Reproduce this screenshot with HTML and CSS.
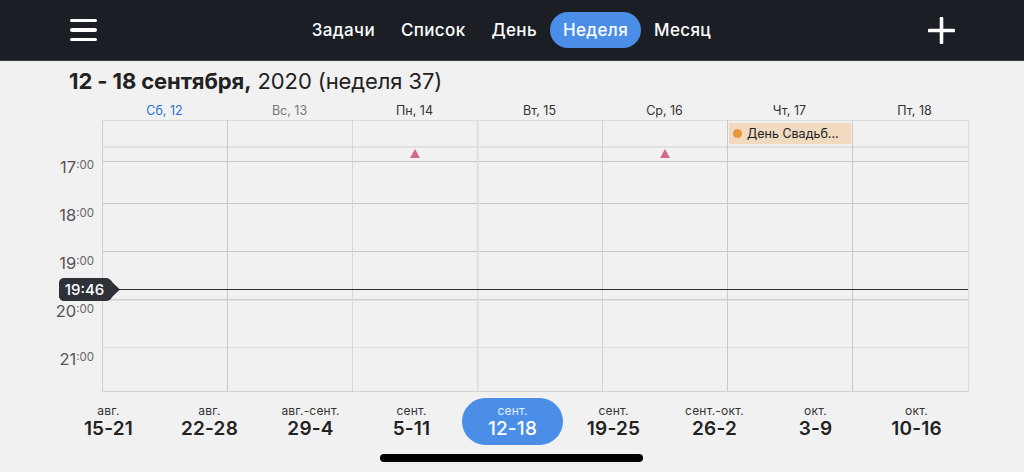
FILE: index.html
```html
<!DOCTYPE html>
<html lang="ru">
<head>
<meta charset="utf-8">
<link rel="stylesheet" href="styles.css">
</head>
<body>
<div class="app">
  <header class="topbar">
    <div class="burger"><span></span><span></span><span></span></div>
    <nav class="tabs">
      <span class="tab">Задачи</span>
      <span class="tab">Список</span>
      <span class="tab">День</span>
      <span class="tab active">Неделя</span>
      <span class="tab">Месяц</span>
    </nav>
    <div class="plus">
      <svg width="27" height="27" viewBox="0 0 27 27"><path d="M13.5 1.5V25.5M1.5 13.5H25.5" stroke="#fff" stroke-width="3.6" stroke-linecap="round"/></svg>
    </div>
  </header>

  <div class="title"><b>12 - 18 сентября,</b> 2020 (неделя 37)</div>

  <div class="dayhead">
    <span class="today">Сб, 12</span>
    <span class="muted">Вс, 13</span>
    <span>Пн, 14</span>
    <span>Вт, 15</span>
    <span>Ср, 16</span>
    <span>Чт, 17</span>
    <span>Пт, 18</span>
  </div>

  <div class="cal">
    <div class="hours">
      <div class="hr"><span class="h">17</span><span class="m">:00</span></div>
      <div class="hr"><span class="h">18</span><span class="m">:00</span></div>
      <div class="hr"><span class="h">19</span><span class="m">:00</span></div>
      <div class="hr"><span class="h">20</span><span class="m">:00</span></div>
      <div class="hr"><span class="h">21</span><span class="m">:00</span></div>
    </div>
    <div class="board">
      <div class="row allday">
        <div></div><div></div><div></div><div></div><div></div>
        <div class="event"><i class="dot"></i>День Свадьб...</div>
        <div></div>
      </div>
      <div class="row marks">
        <div></div><div></div>
        <div class="mark"><i class="tri"></i></div>
        <div></div>
        <div class="mark"><i class="tri"></i></div>
        <div></div><div></div>
      </div>
      <div class="row r42 dark"></div>
      <div class="row r48 dark"></div>
      <div class="row r48 dark"></div>
      <div class="row r48 mid"></div>
      <div class="row r45 light"></div>
      <div class="cols">
        <div></div><div class="c2"></div><div class="c3"></div><div class="c4"></div><div class="c5"></div><div class="c6"></div><div class="c7"></div>
      </div>
      <div class="now"></div>
    </div>
    <div class="badge">
      <svg class="badge-bg" width="62" height="23" viewBox="0 0 62 23"><path d="M5 0H47C50 0 52 2 54 5L61 11.5L54 18C52 21 50 23 47 23H5C2.2 23 0 20.8 0 18V5C0 2.2 2.2 0 5 0Z" fill="#2f3139"/></svg>
      <span class="badge-text">19:46</span>
    </div>
  </div>

  <div class="weeks">
    <div class="wk"><span class="mo">авг.</span><span class="rg">15-21</span></div>
    <div class="wk"><span class="mo">авг.</span><span class="rg">22-28</span></div>
    <div class="wk"><span class="mo">авг.-сент.</span><span class="rg">29-4</span></div>
    <div class="wk"><span class="mo">сент.</span><span class="rg">5-11</span></div>
    <div class="wk sel"><span class="mo">сент.</span><span class="rg">12-18</span></div>
    <div class="wk"><span class="mo">сент.</span><span class="rg">19-25</span></div>
    <div class="wk"><span class="mo">сент.-окт.</span><span class="rg">26-2</span></div>
    <div class="wk"><span class="mo">окт.</span><span class="rg">3-9</span></div>
    <div class="wk"><span class="mo">окт.</span><span class="rg">10-16</span></div>
  </div>

  <div class="homebar"><span></span></div>
</div>
</body>
</html>
```

FILE: styles.css
```css
* { box-sizing: border-box; margin: 0; padding: 0; }
html, body { width: 1024px; height: 472px; overflow: hidden; }
body {
  background: #f1f1f1;
  font-family: "Inter", "Noto Sans", "DejaVu Sans", sans-serif;
  color: #222;
}
.app { width: 1024px; height: 472px; display: flex; flex-direction: column; }

.topbar {
  height: 61px;
  background: #1c1e25;
  border-bottom: 1px solid #3a3c42;
  display: grid;
  grid-template-columns: 1fr auto 1fr;
  align-items: center;
}
.burger {
  margin-left: 70px;
  width: 27px;
  display: flex;
  flex-direction: column;
  gap: 5.8px;
}
.burger span { display: block; height: 3.6px; border-radius: 2px; background: #fff; }
.tabs { display: flex; align-items: center; margin-left: -1px; }
.tab {
  color: #fff;
  font-size: 17px;
  font-weight: 500;
  padding: 0 13px;
  height: 36px;
  line-height: 36px;
  border-radius: 18px;
  letter-spacing: 0.35px;
}
.tab.active { background: #4a8ee8; }
.plus { justify-self: end; margin-right: 69px; display: flex; }

.title {
  font-size: 22px;
  padding: 7px 0 0 69px;
  height: 40px;
  line-height: 26px;
  color: #222;
  letter-spacing: -0.1px;
}
.title b { font-weight: 700; }

.dayhead {
  margin-left: 102px;
  display: grid;
  grid-template-columns: repeat(7, 125px);
  height: 19px;
  font-size: 12.5px;
  line-height: 19px;
  text-align: center;
  color: #333;
}
.dayhead .today { color: #2a72cc; }
.dayhead .muted { color: #777; }

.cal { position: relative; display: flex; height: 272px; }
.hours { width: 102px; padding-top: 37px; padding-right: 8px; }
.hr { height: 48px; text-align: right; color: #555; white-space: nowrap; }
.hr .h { font-size: 16.5px; line-height: 17px; }
.hr .m { font-size: 11.5px; vertical-align: 4px; color: #666; }

.board {
  position: relative;
  width: 867px;
  border-left: 1px solid #cfcfcf;
  border-right: 1px solid #dcdcdc;
  border-bottom: 1px solid #d2d2d2;
}
.row { border-top: 1px solid #c9c9c9; }
.allday, .marks { display: grid; grid-template-columns: 124px repeat(5, 125px) 1fr; }
.allday { height: 26px; border-top-color: #dcdcdc; padding-top: 1px; }
.marks { height: 15px; border-top-color: #e0e0e0; box-shadow: inset 0 3px 0 -2px #e3e3e3; }
.r42 { height: 42px; }
.r48 { height: 48px; }
.r45 { height: 44px; }
.dark { border-top-color: #c6c6c6; }
.mid { border-top-color: #cdcdcd; box-shadow: inset 0 3px 0 -2px #e2e2e2; }
.light { border-top-color: #dedede; }

.event {
  position: relative;
  z-index: 2;
  margin: 1px 1px 2px 2px;
  background: #f0dac0;
  font-size: 12.5px;
  line-height: 21px;
  color: #222;
  white-space: nowrap;
  overflow: hidden;
  display: flex;
  align-items: center;
  padding-left: 4px;
}
.dot { display: inline-block; width: 9px; height: 9px; border-radius: 50%; background: #e8963c; margin-right: 5px; }
.mark { display: flex; justify-content: center; padding-top: 2px; }
.tri {
  width: 0; height: 0;
  border-left: 5px solid transparent;
  border-right: 5px solid transparent;
  border-bottom: 9px solid #d06a8c;
}

.cols {
  position: absolute;
  inset: 0;
  display: grid;
  grid-template-columns: 124px repeat(5, 125px) 1fr;
  pointer-events: none;
}
.cols div + div { border-left: 1px solid #c9c9c9; }
.cols .c3 { border-left-color: #d8d8d8; }
.cols .c4 { border-left-color: #dcdcdc; box-shadow: inset 3px 0 0 -2px #e6e6e6; }
.cols .c5 { border-left-color: #d2d2d2; }

.now {
  position: absolute;
  left: 15px;
  right: 0;
  top: 169px;
  height: 1.4px;
  background: #2c2c2e;
}
.badge {
  position: absolute;
  left: 59px;
  top: 158px;
  width: 62px;
  height: 23px;
}
.badge-bg { position: absolute; left: 0; top: 0; }
.badge-text {
  position: relative;
  display: block;
  width: 51px;
  color: #fff;
  font-size: 15px;
  font-weight: 500;
  line-height: 23px;
  text-align: center;
}

.weeks { display: flex; padding: 6px 0 0 58px; height: 62px; }
.wk {
  width: 101px;
  height: 47px;
  border-radius: 24px;
  display: flex;
  flex-direction: column;
  align-items: center;
  padding-top: 5px;
}
.wk .mo { font-size: 12px; line-height: 15px; color: #333; letter-spacing: 0.2px; }
.wk .rg { font-size: 19px; line-height: 22px; font-weight: 600; color: #222; letter-spacing: 0.2px; }
.wk.sel { background: #4a8ee8; }
.wk.sel .mo { color: #e6f0fc; }
.wk.sel .rg { color: #fff; font-weight: 500; }

.homebar { display: flex; justify-content: center; }
.homebar span { display: block; width: 263px; height: 8px; border-radius: 4px; background: #000; margin-left: -1px; }
```
